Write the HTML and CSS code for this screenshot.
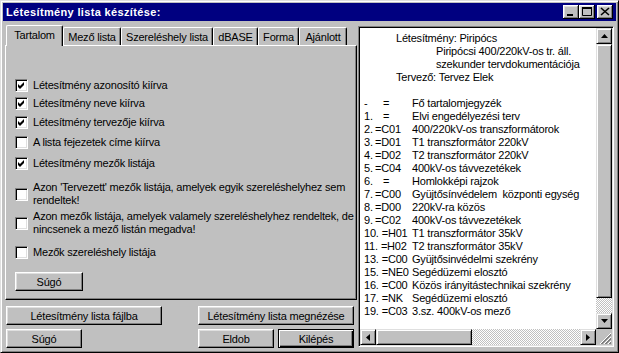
FILE: index.html
```html
<!DOCTYPE html>
<html lang="hu">
<head>
	<meta charset="UTF-8">
	<title>Létesítmény lista készítése</title>
	<link rel="stylesheet" href="styles.css">
</head>
<body>
	<div class="ablak">
		<div class="cimsor">
			<span class="cim">Létesítmény lista készítése:</span>
			<span class="cgomb"><svg width="16" height="14" viewBox="0 0 16 14"><rect x="4" y="9" width="6" height="2" fill="#000"/></svg></span>
			<span class="cgomb"><svg width="16" height="14" viewBox="0 0 16 14"><path d="M3.5 2.5h9v8h-9z" fill="none" stroke="#000"/><rect x="3" y="2" width="10" height="2" fill="#000"/></svg></span>
			<span class="cgomb zar"><svg width="16" height="14" viewBox="0 0 16 14"><path d="M4 3l8 7M12 3l-8 7" stroke="#000" stroke-width="1.6"/></svg></span>
		</div>

		<div class="tartalom">
			<div class="bal">
				<div class="fulek">
					<span class="ful aktiv f1">Tartalom</span>
					<span class="ful f2">Mező lista</span>
					<span class="ful f3">Szereléshely lista</span>
					<span class="ful f4">dBASE</span>
					<span class="ful f5">Forma</span>
					<span class="ful f6">Ajánlott</span>
				</div>
				<div class="lap">
					<div class="sor elso"><span class="doboz be"></span><span>Létesítmény azonosító kiírva</span></div>
					<div class="sor t5"><span class="doboz be"></span><span>Létesítmény neve kiírva</span></div>
					<div class="sor t6"><span class="doboz be"></span><span>Létesítmény tervezője kiírva</span></div>
					<div class="sor t7"><span class="doboz"></span><span>A lista fejezetek címe kiírva</span></div>
					<div class="sor t8"><span class="doboz be"></span><span>Létesítmény mezők listája</span></div>
					<div class="sor t11"><span class="doboz"></span><span>Azon 'Tervezett' mezők listája, amelyek egyik szereléshelyhez sem<br>rendeltek!</span></div>
					<div class="sor t3"><span class="doboz"></span><span>Azon mezők listája, amelyek valamely szereléshelyhez rendeltek, de<br>nincsenek a mező listán megadva!</span></div>
					<div class="sor t10"><span class="doboz"></span><span>Mezők szereléshely listája</span></div>
					<button class="gomb kis">Súgó</button>
				</div>
				<div class="gombsor elsosor">
					<button class="gomb szeles">Létesítmény lista fájlba</button>
					<button class="gomb szeles">Létesítmény lista megnézése</button>
				</div>
				<div class="gombsor">
					<button class="gomb">Súgó</button>
					<button class="gomb jobbra">Eldob</button>
					<button class="gomb alap">Kilépés</button>
				</div>
			</div>

			<div class="memo">
				<div class="szoveg">
					<div class="bek1">Létesítmény: Piripócs</div>
					<div class="bek2">Piripócsi 400/220kV-os tr. áll.</div>
					<div class="bek2">szekunder tervdokumentációja</div>
					<div class="bek1">Tervező: Tervez Elek</div>
					<div class="ures"></div>
					<div class="tsor"><span class="kod"><span class="szam">-</span><span class="egyedul">=</span></span><span>Fő tartalomjegyzék</span></div>
					<div class="tsor"><span class="kod"><span class="szam">1.</span><span class="egyedul">=</span></span><span>Elvi engedélyezési terv</span></div>
					<div class="tsor"><span class="kod"><span class="szam">2.</span>=C01</span><span>400/220kV-os transzformátorok</span></div>
					<div class="tsor"><span class="kod"><span class="szam">3.</span>=D01</span><span>T1 transzformátor 220kV</span></div>
					<div class="tsor"><span class="kod"><span class="szam">4.</span>=D02</span><span>T2 transzformátor 220kV</span></div>
					<div class="tsor"><span class="kod"><span class="szam">5.</span>=C04</span><span>400kV-os távvezetékek</span></div>
					<div class="tsor"><span class="kod"><span class="szam">6.</span><span class="egyedul">=</span></span><span>Homlokképi rajzok</span></div>
					<div class="tsor"><span class="kod"><span class="szam">7.</span>=C00</span><span>Gyüjtősínvédelem&nbsp; központi egység</span></div>
					<div class="tsor"><span class="kod"><span class="szam">8.</span>=D00</span><span>220kV-ra közös</span></div>
					<div class="tsor"><span class="kod"><span class="szam">9.</span>=C02</span><span>400kV-os távvezetékek</span></div>
					<div class="tsor"><span class="kod"><span class="szam ketjegyu">10.</span>=H01</span><span>T1 transzformátor 35kV</span></div>
					<div class="tsor"><span class="kod"><span class="szam ketjegyu">11.</span>=H02</span><span>T2 transzformátor 35kV</span></div>
					<div class="tsor"><span class="kod"><span class="szam ketjegyu">13.</span>=C00</span><span>Gyüjtősinvédelmi szekrény</span></div>
					<div class="tsor"><span class="kod"><span class="szam ketjegyu">15.</span>=NE0</span><span>Segédüzemi elosztó</span></div>
					<div class="tsor"><span class="kod"><span class="szam ketjegyu">16.</span>=C00</span><span>Közös irányitástechnikai szekrény</span></div>
					<div class="tsor"><span class="kod"><span class="szam ketjegyu">17.</span>=NK</span><span>Segédüzemi elosztó</span></div>
					<div class="tsor"><span class="kod"><span class="szam ketjegyu">19.</span>=C03</span><span>3.sz. 400kV-os mező</span></div>
				</div>
				<div class="fgorgeto">
					<span class="nyil"><svg width="7" height="4" viewBox="0 0 7 4"><path d="M3.5 0L7 4H0z" fill="#000"/></svg></span>
					<span class="fogo fuggoleges"></span>
					<span class="sav"></span>
					<span class="nyil"><svg width="7" height="4" viewBox="0 0 7 4"><path d="M0 0h7L3.5 4z" fill="#000"/></svg></span>
				</div>
				<div class="vgorgeto">
					<span class="nyil"><svg width="4" height="7" viewBox="0 0 4 7"><path d="M4 0v7L0 3.5z" fill="#000"/></svg></span>
					<span class="fogo vizszintes"></span>
					<span class="sav"></span>
					<span class="nyil"><svg width="4" height="7" viewBox="0 0 4 7"><path d="M0 0l4 3.5L0 7z" fill="#000"/></svg></span>
				</div>
				<div class="sarok"><svg width="16" height="16" viewBox="0 0 16 16"><path d="M15 4L4 15M15 8L8 15M15 12L12 15" stroke="#fff" stroke-width="1"/><path d="M15 5L5 15M15 6L6 15M15 9L9 15M15 10L10 15M15 13L13 15M15 14L14 15" stroke="#808080" stroke-width="1"/></svg></div>
			</div>
		</div>
	</div>
</body>
</html>
```

FILE: styles.css
```css
html, body {
	margin : 0;
	padding : 0;
	background-color : #c0c0c0;
}
body {
	font-family : "Liberation Sans", Arial, sans-serif;
	font-size : 11px;
	letter-spacing : -0.2px;
	color : #000;
}

/* ablakkeret */
.ablak {
	box-sizing : border-box;
	width : 619px;
	height : 353px;
	padding : 2px;
	border : 1px solid;
	border-color : #dfdfdf #000 #000 #dfdfdf;
	box-shadow : inset 1px 1px #fff, inset -1px -1px #808080;
	background-color : #c0c0c0;
	overflow : hidden;
}
.cimsor {
	display : flex;
	align-items : center;
	height : 18px;
	background-color : #000080;
	padding-right : 3px;
}
.cim {
	flex : 1;
	color : #fff;
	font-weight : bold;
	padding-left : 3px;
	letter-spacing : 0.35px;
}
.cgomb {
	display : block;
	box-sizing : border-box;
	width : 16px;
	height : 14px;
	background-color : #c0c0c0;
	box-shadow : inset -1px -1px #000, inset 1px 1px #fff, inset -2px -2px #808080, inset 2px 2px #dfdfdf;
}
.cgomb svg {
	display : block;
}
.zar {
	margin-left : 2px;
}

.tartalom {
	display : flex;
	padding : 4px 2px 0 2px;
}
.bal {
	width : 352px;
	flex : none;
}

/* fulek */
.fulek {
	display : flex;
	align-items : flex-end;
	height : 20px;
	padding-left : 1px;
}
.ful {
	box-sizing : border-box;
	height : 18px;
	padding-top : 3px;
	text-align : center;
	border-top : 1px solid #fff;
	border-left : 1px solid #fff;
	border-right : 1px solid #000;
	border-radius : 2px 2px 0 0;
	box-shadow : inset -1px 0 #808080;
	white-space : nowrap;
}
.ful.aktiv {
	height : 21px;
	margin-bottom : -1px;
	padding-top : 3px;
	position : relative;
	z-index : 1;
	background-color : #c0c0c0;
}
.f1 { width : 57px; }
.f2 { width : 58px; }
.f3 { width : 92px; }
.f4 { width : 45px; }
.f5 { width : 41px; }
.f6 { width : 48px; }

.lap {
	box-sizing : border-box;
	height : 255px;
	padding-left : 9px;
	border : 1px solid;
	border-color : #fff #000 #000 #fff;
	box-shadow : inset -1px -1px #808080;
}
.sor {
	display : flex;
	align-items : center;
	line-height : 13px;
}
.sor .doboz {
	margin-right : 5px;
}
.elso { margin-top : 33px; }
.t3 { margin-top : 3px; }
.t5 { margin-top : 5px; }
.t6 { margin-top : 6px; }
.t7 { margin-top : 7px; }
.t8 { margin-top : 8px; }
.t10 { margin-top : 10px; }
.t11 { margin-top : 11px; }

.doboz {
	box-sizing : border-box;
	flex : none;
	width : 13px;
	height : 13px;
	background-color : #fff;
	border : 1px solid;
	border-color : #808080 #fff #fff #808080;
	box-shadow : inset 1px 1px #000, inset -1px -1px #dfdfdf;
}
.doboz.be {
	background-image : url("data:image/svg+xml,%3Csvg xmlns='http://www.w3.org/2000/svg' width='11' height='11'%3E%3Cpath d='M2 4l2 2l4-4v3l-4 4l-2-2z' fill='%23000'/%3E%3C/svg%3E");
	background-repeat : no-repeat;
}

/* gombok */
.gomb {
	box-sizing : border-box;
	width : 76px;
	height : 19px;
	margin : 0;
	padding : 0;
	font-family : inherit;
	font-size : 11px;
	letter-spacing : -0.2px;
	color : #000;
	background-color : #c0c0c0;
	border : 1px solid;
	border-color : #fff #000 #000 #fff;
	box-shadow : inset -1px -1px #808080, inset 1px 1px #dfdfdf;
}
.gomb.kis {
	display : block;
	width : 68px;
	margin-top : 13px;
}
.gomb.szeles {
	width : 156px;
}
.gomb.alap {
	border-color : #000;
	box-shadow : inset 1px 1px #fff, inset -1px -1px #000, inset -2px -2px #808080;
}
.gombsor {
	display : flex;
	justify-content : space-between;
	padding : 0 3px 0 1px;
	margin-top : 4px;
}
.elsosor {
	margin-top : 6px;
}
.jobbra {
	margin-left : auto;
	margin-right : 4px;
}

/* memo */
.memo {
	box-sizing : border-box;
	width : 256px;
	height : 321px;
	margin : 1px 0 0 1px;
	display : grid;
	grid-template-columns : 1fr 16px;
	grid-template-rows : 1fr 16px;
	border : 1px solid;
	border-color : #808080 #fff #fff #808080;
	box-shadow : inset 1px 1px #000, inset -1px -1px #dfdfdf;
	padding : 1px;
}
.szoveg {
	background-color : #fff;
	padding : 4px 0 0 4px;
	line-height : 13px;
	overflow : hidden;
	white-space : nowrap;
}
.bek1 { padding-left : 32px; }
.bek2 { padding-left : 72px; }
.ures { height : 13px; }
.tsor {
	display : flex;
}
.kod {
	flex : none;
	width : 48px;
	white-space : pre;
}
.szam {
	display : inline-block;
	min-width : 11px;
}
.szam.ketjegyu {
	margin-right : 3px;
}
.egyedul {
	margin-left : 8px;
}

.fgorgeto, .vgorgeto {
	display : flex;
	background : repeating-conic-gradient(#c0c0c0 0 25%, #fff 0 50%) 0 0 / 2px 2px;
}
.fgorgeto {
	flex-direction : column;
}
.nyil, .fogo {
	box-sizing : border-box;
	display : flex;
	align-items : center;
	justify-content : center;
	flex : none;
	width : 16px;
	height : 16px;
	background-color : #c0c0c0;
	border : 1px solid;
	border-color : #dfdfdf #000 #000 #dfdfdf;
	box-shadow : inset 1px 1px #fff, inset -1px -1px #808080;
}
.fogo.fuggoleges {
	height : 254px;
}
.fogo.vizszintes {
	width : 96px;
}
.sav {
	flex : 1;
}
.sarok {
	background-color : #c0c0c0;
}
.sarok svg {
	display : block;
}
```
